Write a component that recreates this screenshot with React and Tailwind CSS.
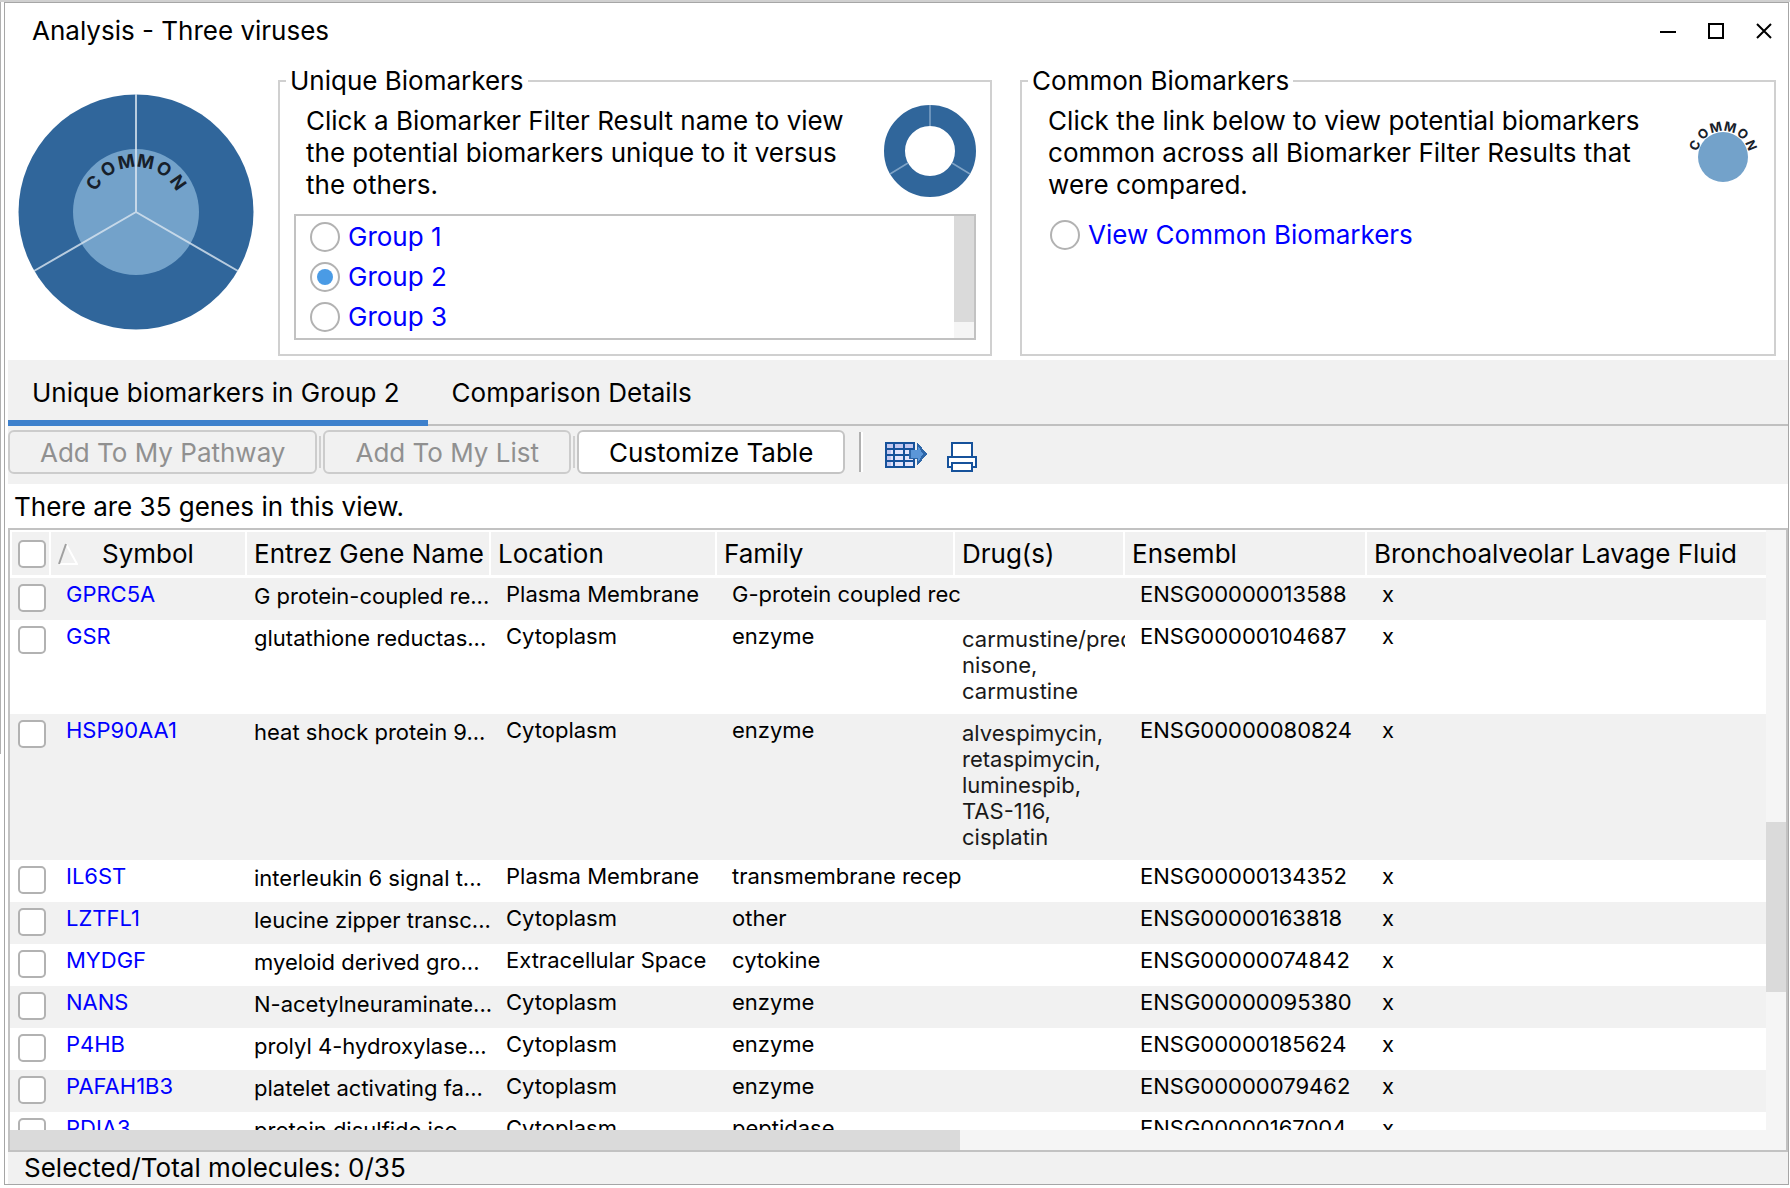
import React, { useState } from 'react'

const groups = ['Group 1', 'Group 2', 'Group 3']

const columns = ['Entrez Gene Name', 'Location', 'Family', 'Drug(s)', 'Ensembl', 'Bronchoalveolar Lavage Fluid']

const genes = [
  { symbol: 'GPRC5A', name: 'G protein-coupled re...', location: 'Plasma Membrane', family: 'G-protein coupled rec', drugs: [], ensembl: 'ENSG00000013588' },
  { symbol: 'GSR', name: 'glutathione reductas...', location: 'Cytoplasm', family: 'enzyme', drugs: ['carmustine/pred', 'nisone,', 'carmustine'], ensembl: 'ENSG00000104687' },
  { symbol: 'HSP90AA1', name: 'heat shock protein 9...', location: 'Cytoplasm', family: 'enzyme', drugs: ['alvespimycin,', 'retaspimycin,', 'luminespib,', 'TAS-116,', 'cisplatin'], ensembl: 'ENSG00000080824' },
  { symbol: 'IL6ST', name: 'interleukin 6 signal t...', location: 'Plasma Membrane', family: 'transmembrane recep', drugs: [], ensembl: 'ENSG00000134352' },
  { symbol: 'LZTFL1', name: 'leucine zipper transc...', location: 'Cytoplasm', family: 'other', drugs: [], ensembl: 'ENSG00000163818' },
  { symbol: 'MYDGF', name: 'myeloid derived gro...', location: 'Extracellular Space', family: 'cytokine', drugs: [], ensembl: 'ENSG00000074842' },
  { symbol: 'NANS', name: 'N-acetylneuraminate...', location: 'Cytoplasm', family: 'enzyme', drugs: [], ensembl: 'ENSG00000095380' },
  { symbol: 'P4HB', name: 'prolyl 4-hydroxylase...', location: 'Cytoplasm', family: 'enzyme', drugs: [], ensembl: 'ENSG00000185624' },
  { symbol: 'PAFAH1B3', name: 'platelet activating fa...', location: 'Cytoplasm', family: 'enzyme', drugs: [], ensembl: 'ENSG00000079462' },
  { symbol: 'PDIA3', name: 'protein disulfide iso...', location: 'Cytoplasm', family: 'peptidase', drugs: [], ensembl: 'ENSG00000167004' }
]

// C-O-M-M-O-N letters fanned around the top of a circle
const ArcLabel = ({ cx, cy, r, size, step }) => (
  <g fill="#17202a" fontFamily="Inter, sans-serif" fontWeight="700" fontSize={size} textAnchor="middle">
    {'COMMON'.split('').map((letter, i) => (
      <text key={i} x={cx} y={cy - r} transform={`rotate(${(i - 2.5) * step} ${cx} ${cy})`}>
        {letter}
      </text>
    ))}
  </g>
)

const OverviewChart = () => (
  <svg width="236" height="236" viewBox="0 0 236 236" className="shrink-0">
    <circle cx="118" cy="118" r="117.5" fill="#30669b" />
    <circle cx="118" cy="118" r="63" fill="#73a2ca" />
    <ArcLabel cx={118} cy={118} r={45} size={18} step={22} />
    <path d="M118 118V0M118 118L16 177M118 118L220 177" stroke="#dbe6f0" strokeOpacity="0.8" strokeWidth="2" fill="none" />
  </svg>
)

const UniqueIcon = () => (
  <svg width="92" height="92" viewBox="0 0 92 92" className="shrink-0">
    <circle cx="46" cy="46" r="35.5" fill="none" stroke="#30669b" strokeWidth="21" />
    <path d="M46 21V0M24 58L6 69M68 58L86 69" stroke="#7fa3c6" strokeWidth="1.5" fill="none" />
  </svg>
)

const CommonIcon = () => (
  <svg width="72" height="64" viewBox="0 0 72 64" className="shrink-0">
    <ArcLabel cx={37} cy={38} r={26} size={13} step={27} />
    <circle cx="37" cy="38" r="25" fill="#73a2ca" />
  </svg>
)

const ExportIcon = () => (
  <svg width="42" height="26" viewBox="0 0 42 26" shapeRendering="crispEdges">
    <path d="M1 1H29V25H1Z" fill="#e3e4fb" />
    <path d="M2 2H28V6H2ZM2 8H6V24H2Z" fill="#c3c8f0" />
    <path d="M1 1H29V25H1ZM1 7H29M1 13H29M1 19H29M9 1V25M19 1V25" stroke="#16529b" strokeWidth="2" fill="none" />
    <path d="M24 8H32V0L42 12L32 24V17H24Z" fill="#2d66a8" />
    <path d="M26 8H33V4L38 12L33 20V16H26Z" fill="#5b96d8" />
  </svg>
)

const PrintIcon = () => (
  <svg width="30" height="30" viewBox="0 0 30 30" shapeRendering="crispEdges" fill="#fff" stroke="#16529b" strokeWidth="2">
    <path d="M5 1H25V15H5Z" />
    <path d="M1 15H29V25H1Z" />
    <path d="M5 21H25V29H5Z" />
  </svg>
)

const SortIcon = () => (
  <svg width="20" height="22" viewBox="0 0 20 22" fill="none" strokeWidth="2">
    <path d="M8 1L19 21H1" stroke="#ffffff" />
    <path d="M1 21L8 1" stroke="#a0a0a0" />
  </svg>
)

const Radio = ({ name, label, checked, onChange }) => (
  <label className="flex h-10 items-center gap-2 text-[#0000ff]">
    <input
      type="radio"
      name={name}
      checked={checked}
      onChange={onChange}
      className="m-0 h-[30px] w-[30px] appearance-none rounded-full border-2 border-[#b2b2b2] bg-white bg-clip-content p-[5px] checked:bg-[#4a9be5]"
    />
    {label}
  </label>
)

const Checkbox = ({ label }) => (
  <input
    type="checkbox"
    aria-label={label}
    className="m-0 block h-7 w-7 appearance-none rounded-[5px] border-2 border-[#b2b2b2] bg-white checked:bg-[#4a9be5]"
  />
)

const Panel = ({ title, className, children }) => (
  <fieldset className={`mt-[6px] min-w-0 border-2 border-[#d0d0d0] ${className}`}>
    <legend className="ml-[6px] px-1 leading-8">{title}</legend>
    {children}
  </fieldset>
)

const TitleBar = () => (
  <header className="flex h-14 shrink-0 items-center justify-between pr-4 pl-6">
    <h1>Analysis - Three viruses</h1>
    <div className="flex gap-8">
      <button aria-label="Minimize">
        <svg width="16" height="16" viewBox="0 0 16 16"><path d="M0 9H16" stroke="#000" strokeWidth="2" /></svg>
      </button>
      <button aria-label="Maximize">
        <svg width="16" height="16" viewBox="0 0 16 16"><path d="M1 1H15V15H1Z" stroke="#000" strokeWidth="2" fill="none" /></svg>
      </button>
      <button aria-label="Close">
        <svg width="16" height="16" viewBox="0 0 16 16"><path d="M1 1L15 15M15 1L1 15" stroke="#000" strokeWidth="2" /></svg>
      </button>
    </div>
  </header>
)

const Toolbar = () => (
  <div className="flex items-center pt-1 pb-[10px]">
    <button disabled className="h-11 rounded-md border-2 border-[#cccccc] px-[30px] pt-[2px] text-[#909090]">Add To My Pathway</button>
    <span className="mx-[2px] h-8 w-[2px] bg-[#d0d0d0]" />
    <button disabled className="h-11 rounded-md border-2 border-[#cccccc] px-[30px] pt-[2px] text-[#909090]">Add To My List</button>
    <span className="mx-[2px] h-8 w-[2px] bg-[#d0d0d0]" />
    <button className="h-11 rounded-md border-2 border-[#c4c4c4] bg-white px-[30px] pt-[2px]">Customize Table</button>
    <span className="mr-[22px] ml-[14px] h-10 w-1 border-r-2 border-l-2 border-l-[#b0b0b0] border-r-white" />
    <div className="flex items-start gap-5 pt-[10px]">
      <button aria-label="Export table"><ExportIcon /></button>
      <button aria-label="Print"><PrintIcon /></button>
    </div>
  </div>
)

const GeneRow = ({ gene }) => (
  <tr className="h-[42px] align-top odd:bg-[#f1f1f1]">
    <td className="pt-[6px] pl-2"><Checkbox label={gene.symbol} /></td>
    <td className="pt-[3px] pl-[15px]"><a href="#" className="text-[#0000ff]">{gene.symbol}</a></td>
    <td className="pt-[5px] pl-[7px]">{gene.name}</td>
    <td className="pt-[3px] pl-[15px]">{gene.location}</td>
    <td className="pt-[3px] pl-[15px]">{gene.family}</td>
    <td className="overflow-hidden pl-[7px] text-[#1a1a1a]">
      {gene.drugs.length > 0 && (
        <div className="pt-[6px] pb-[10px]">
          {gene.drugs.map((drug) => <div key={drug}>{drug}</div>)}
        </div>
      )}
    </td>
    <td className="pt-[3px] pl-[15px]">{gene.ensembl}</td>
    <td className="pt-[3px] pl-[15px]">x</td>
  </tr>
)

const GeneTable = () => (
  <div className="flex min-h-0 flex-1 border-2 border-[#c2c2c2]">
    <div className="flex min-w-0 flex-1 flex-col">
      <div className="min-h-0 flex-1 overflow-hidden">
        <table className="w-full table-fixed border-separate border-spacing-0 text-left text-[22px] leading-[26px] whitespace-nowrap">
          <colgroup>
            <col className="w-[41px]" />
            <col className="w-[196px]" />
            <col className="w-[244px]" />
            <col className="w-[226px]" />
            <col className="w-[238px]" />
            <col className="w-[170px]" />
            <col className="w-[242px]" />
            <col />
          </colgroup>
          <thead>
            <tr className="h-12 bg-[#f1f1f1] text-[26px]">
              <th className="border-x-2 border-t-2 border-b-3 border-white pl-[6px]"><Checkbox label="Select all" /></th>
              <th className="border-t-2 border-r-2 border-b-3 border-white pl-[7px] font-normal">
                <div className="flex items-center gap-6"><SortIcon />Symbol</div>
              </th>
              {columns.map((column) => (
                <th key={column} className="border-t-2 border-r-2 border-b-3 border-white pl-[7px] font-normal last:border-r-0">{column}</th>
              ))}
            </tr>
          </thead>
          <tbody>
            {genes.map((gene) => <GeneRow key={gene.symbol} gene={gene} />)}
          </tbody>
        </table>
      </div>
      <div className="h-5 shrink-0 bg-[#f5f5f5]">
        <div className="h-full w-[950px] bg-[#dadada]" />
      </div>
    </div>
    <div className="flex w-5 shrink-0 flex-col bg-[#f5f5f5]">
      <div className="mt-[292px] h-[170px] bg-[#dadada]" />
    </div>
  </div>
)

const App = () => {
  const [selected, setSelected] = useState('Group 2')

  return (
    <div className="flex h-screen border-t-2 border-[#d0d0d0] bg-white pr-px pb-[3px] font-[Inter,'Liberation_Sans',sans-serif] text-[26px] leading-8 text-black">
      <div className="mr-[3px] h-[752px] w-px shrink-0 bg-[#b0b0b0]" />
      <main className="flex min-h-0 min-w-0 flex-1 flex-col border border-[#a6a6a6] pl-[3px]">
        <TitleBar />

        <section className="flex h-[301px] shrink-0 pr-3 pb-1 pl-[10px]">
          <div className="mr-6 pt-[35px]"><OverviewChart /></div>
          <Panel title="Unique Biomarkers" className="flex-[714]">
            <div className="px-[14px] pt-2">
              <div className="flex justify-between">
                <p className="w-[560px] pl-3">
                  Click a Biomarker Filter Result name to view the potential biomarkers unique to it versus the others.
                </p>
                <UniqueIcon />
              </div>
              <div className="mt-[13px] flex h-[126px] justify-between border-2 border-[#c2c2c2]">
                <div className="pt-px pl-[14px]">
                  {groups.map((group) => (
                    <Radio key={group} name="result" label={group} checked={selected === group} onChange={() => setSelected(group)} />
                  ))}
                </div>
                <div className="w-5 bg-[#f5f5f5]">
                  <div className="h-[106px] bg-[#dadada]" />
                </div>
              </div>
            </div>
          </Panel>
          <Panel title="Common Biomarkers" className="ml-7 flex-[756]">
            <div className="pt-2 pr-4 pl-[26px]">
              <div className="flex items-start justify-between">
                <p className="w-[610px]">
                  Click the link below to view potential biomarkers common across all Biomarker Filter Results that were compared.
                </p>
                <div className="pt-[14px]"><CommonIcon /></div>
              </div>
              <div className="pt-[14px] pl-[2px]">
                <Radio name="result" label="View Common Biomarkers" checked={selected === 'common'} onChange={() => setSelected('common')} />
              </div>
            </div>
          </Panel>
        </section>

        <section className="shrink-0 bg-[#f1f1f1]">
          <nav className="flex h-[66px] border-b-2 border-[#c0c0c0]">
            <button className="-mb-[2px] border-b-6 border-[#3d80cc] pt-[6px] pr-7 pl-6">Unique biomarkers in Group 2</button>
            <button className="px-6 pt-[2px]">Comparison Details</button>
          </nav>
          <Toolbar />
        </section>

        <p className="shrink-0 pt-[7px] pb-[5px] pl-[6px]">There are 35 genes in this view.</p>
        <GeneTable />
        <footer className="h-8 shrink-0 bg-[#f1f1f1] pl-4">Selected/Total molecules: 0/35</footer>
      </main>
    </div>
  )
}

export default App
